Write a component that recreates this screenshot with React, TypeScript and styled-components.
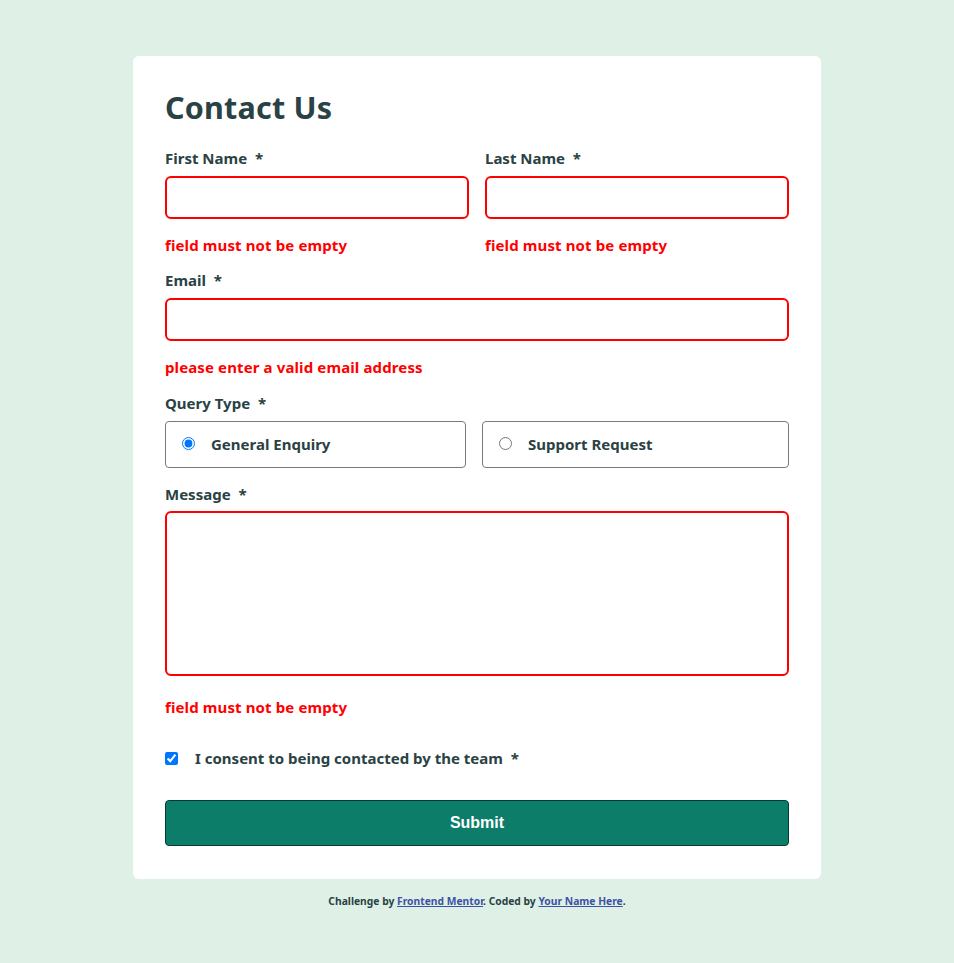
import React from "react";
import styled, { createGlobalStyle } from "styled-components";

const Global = createGlobalStyle`
  html, body { margin: 0; padding: 0; }
  body {
    background: #dff1e7;
    font-family: "Noto Sans", "Open Sans", sans-serif;
    color: #2a4244;
  }
`;

const Page = styled.main`
  display: flex;
  flex-direction: column;
  align-items: center;
  padding-top: 56px;
  padding-bottom: 40px;
`;

const Card = styled.form`
  width: 688px;
  box-sizing: border-box;
  background: #ffffff;
  border-radius: 6px;
  padding: 32px 32px 33px;
  display: flex;
  flex-direction: column;
`;

const Title = styled.h1`
  margin: 0;
  font-size: 30.5px;
  line-height: 38px;
  font-weight: 700;
  color: #2a4244;
  letter-spacing: 0.2px;
`;

const Row = styled.div<{ $cols?: string }>`
  display: grid;
  grid-template-columns: ${(p) => p.$cols || "1fr 1fr"};
  column-gap: 16px;
`;

const Field = styled.div<{ $mt: number }>`
  display: flex;
  flex-direction: column;
  margin-top: ${(p) => p.$mt}px;
`;

const Label = styled.label`
  font-size: 15px;
  line-height: 20px;
  font-weight: 700;
  color: #2a4244;
  white-space: pre;
`;

const TextInput = styled.input`
  margin-top: 8px;
  height: 43px;
  box-sizing: border-box;
  border: 2px solid #ff0000;
  border-radius: 6px;
  outline: none;
  padding: 0 12px;
  font: inherit;
  background: #fff;
`;

const TextArea = styled.textarea`
  margin-top: 7px;
  height: 165px;
  box-sizing: border-box;
  border: 2px solid #ff0000;
  border-radius: 6px;
  outline: none;
  resize: none;
  padding: 10px 12px;
  font: inherit;
  background: #fff;
`;

const ErrorText = styled.span<{ $mt: number }>`
  margin-top: ${(p) => p.$mt}px;
  font-size: 15px;
  line-height: 20px;
  font-weight: 700;
  letter-spacing: 0.12px;
  color: #ff0000;
`;

const RadioBox = styled.label`
  margin-top: 8px;
  height: 47px;
  box-sizing: border-box;
  border: 1px solid #7a7a7a;
  border-radius: 4px;
  display: flex;
  align-items: center;
  padding-left: 16px;
  padding-bottom: 2px;
  gap: 16px;
  font-size: 15px;
  font-weight: 700;
  color: #2a4244;
`;

const Radio = styled.input`
  margin: 0;
  width: 13px;
  height: 13px;
`;

const ConsentRow = styled.label`
  margin-top: 31px;
  display: flex;
  align-items: center;
  gap: 17px;
  font-size: 15px;
  line-height: 20px;
  font-weight: 700;
  color: #2a4244;
  white-space: pre;
`;

const Check = styled.input`
  margin: 0;
  width: 13px;
  height: 13px;
`;

const Submit = styled.button`
  margin-top: 32px;
  height: 46px;
  background: #0c7d69;
  border: 1px solid #063b32;
  border-radius: 4px;
  color: #ffffff;
  font-family: "Liberation Sans", Arial, sans-serif;
  font-size: 16px;
  font-weight: 700;
  cursor: pointer;
`;

const Footer = styled.p`
  margin: 15px 0 0;
  font-size: 10.3px;
  line-height: 14px;
  font-weight: 700;
  color: #2a4244;
  text-align: center;
`;

const Link = styled.a`
  color: #3e52a3;
  text-decoration: underline;
`;

export default function App() {
  return (
    <>
      <Global />
      <Page>
        <Card onSubmit={(e) => e.preventDefault()}>
          <Title>Contact Us</Title>
          <Row>
            <Field $mt={22}>
              <Label>First Name  *</Label>
              <TextInput type="text" />
              <ErrorText $mt={16}>field must not be empty</ErrorText>
            </Field>
            <Field $mt={22}>
              <Label>Last Name  *</Label>
              <TextInput type="text" />
              <ErrorText $mt={16}>field must not be empty</ErrorText>
            </Field>
          </Row>
          <Field $mt={15}>
            <Label>Email  *</Label>
            <TextInput type="email" />
            <ErrorText $mt={16}>please enter a valid email address</ErrorText>
          </Field>
          <Field $mt={16}>
            <Label>Query Type  *</Label>
            <Row $cols="301fr 307fr">
              <RadioBox>
                <Radio type="radio" name="query" defaultChecked />
                General Enquiry
              </RadioBox>
              <RadioBox>
                <Radio type="radio" name="query" />
                Support Request
              </RadioBox>
            </Row>
          </Field>
          <Field $mt={16}>
            <Label>Message  *</Label>
            <TextArea />
            <ErrorText $mt={21}>field must not be empty</ErrorText>
          </Field>
          <ConsentRow>
            <Check type="checkbox" defaultChecked />
            I consent to being contacted by the team  *
          </ConsentRow>
          <Submit type="submit">Submit</Submit>
        </Card>
        <Footer>
          Challenge by <Link href="#">Frontend Mentor</Link>. Coded by{" "}
          <Link href="#">Your Name Here</Link>.
        </Footer>
      </Page>
    </>
  );
}
